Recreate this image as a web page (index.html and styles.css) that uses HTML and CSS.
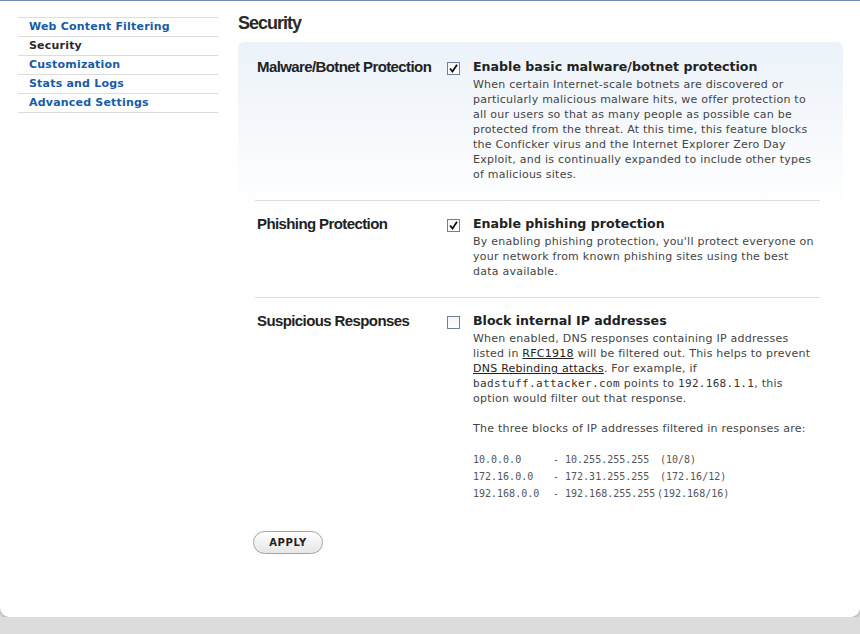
FILE: index.html
```html
<!DOCTYPE html>
<html>
<head>
<meta charset="utf-8">
<title>Security</title>
<link rel="stylesheet" href="styles.css">
</head>
<body>
<div class="page">
  <nav class="sidebar">
    <a class="nav-item" href="#">Web Content Filtering</a>
    <span class="nav-item active">Security</span>
    <a class="nav-item" href="#">Customization</a>
    <a class="nav-item" href="#">Stats and Logs</a>
    <a class="nav-item" href="#">Advanced Settings</a>
  </nav>
  <main class="main">
    <h1 class="heading">Security</h1>
    <div class="box">
      <div class="row">
        <div class="label">Malware/Botnet Protection</div>
        <span class="check checked"><svg viewBox="0 0 11 11" width="11" height="11"><path d="M2 5.5 L4.5 8.5 L9 1.8" fill="none" stroke="#111" stroke-width="1.8"/></svg></span>
        <div class="content">
          <div class="title">Enable basic malware/botnet protection</div>
          <p class="desc">When certain Internet-scale botnets are discovered or particularly malicious malware hits, we offer protection to all our users so that as many people as possible can be protected from the threat. At this time, this feature blocks the Conficker virus and the Internet Explorer Zero Day Exploit, and is continually expanded to include other types of malicious sites.</p>
        </div>
      </div>
      <div class="row">
        <div class="label">Phishing Protection</div>
        <span class="check checked"><svg viewBox="0 0 11 11" width="11" height="11"><path d="M2 5.5 L4.5 8.5 L9 1.8" fill="none" stroke="#111" stroke-width="1.8"/></svg></span>
        <div class="content">
          <div class="title">Enable phishing protection</div>
          <p class="desc">By enabling phishing protection, you'll protect everyone on your network from known phishing sites using the best data available.</p>
        </div>
      </div>
      <div class="row last">
        <div class="label">Suspicious Responses</div>
        <span class="check"></span>
        <div class="content">
          <div class="title">Block internal IP addresses</div>
          <p class="desc">When enabled, DNS responses containing IP addresses listed in <a href="#">RFC1918</a> will be filtered out. This helps to prevent <a href="#">DNS Rebinding attacks</a>. For example, if <code>badstuff.attacker.com</code> points to <code class="ip">192.168.1.1</code>, this option would filter out that response.</p>
          <p class="desc">The three blocks of IP addresses filtered in responses are:</p>
          <div class="ranges">
            <span>10.0.0.0</span><span>- 10.255.255.255</span><span class="cidr1">(10/8)</span>
            <span>172.16.0.0</span><span>- 172.31.255.255</span><span class="cidr1">(172.16/12)</span>
            <span>192.168.0.0</span><span>- 192.168.255.255</span><span>(192.168/16)</span>
          </div>
        </div>
      </div>
      <div class="actions">
        <button class="apply" type="button">APPLY</button>
      </div>
    </div>
  </main>
</div>
</body>
</html>
```

FILE: styles.css
```css
html, body {
  margin: 0;
  padding: 0;
}
body {
  background: #dcdcdc;
  font-family: "DejaVu Sans", Verdana, sans-serif;
}
.page {
  background: #fff;
  border-top: 1px solid #768eb2;
  height: 616px;
  border-radius: 0 0 9px 9px;
  box-shadow: 0 1px 3px rgba(0, 0, 0, 0.28);
  display: flex;
  align-items: flex-start;
}
.sidebar {
  margin-left: 18px;
  margin-top: 16px;
  width: 200px;
  display: flex;
  flex-direction: column;
  border-bottom: 1px solid #dcdcdc;
}
.nav-item {
  display: block;
  border-top: 1px solid #dcdcdc;
  height: 18px;
  line-height: 18px;
  padding-left: 11px;
  font-size: 11px;
  font-weight: bold;
  letter-spacing: 0.2px;
  color: #175ca6;
  text-decoration: none;
}
.nav-item.active {
  color: #2a2a2a;
}
.main {
  margin-left: 20px;
  width: 605px;
  padding-top: 11px;
}
.heading {
  margin: 0 0 8px 0;
  font-family: "Liberation Sans", Arial, sans-serif;
  font-size: 18px;
  line-height: 22px;
  letter-spacing: -1px;
  font-weight: bold;
  color: #2a2a2a;
}
.box {
  border-radius: 6px 6px 0 0;
  background: linear-gradient(#ebf2f9 0px, #f6f9fc 90px, #ffffff 170px);
  padding-top: 2px;
}
.row {
  margin: 0 23px 0 17px;
  padding: 13px 0 18px 0;
  border-bottom: 1px solid #dedede;
  display: grid;
  grid-template-columns: 192px 26px 345px;
  align-items: start;
}
.row.last {
  border-bottom: none;
}
.label {
  padding-left: 2px;
  font-family: "Liberation Sans", Arial, sans-serif;
  font-size: 15px;
  font-weight: bold;
  letter-spacing: -0.6px;
  line-height: 20px;
  color: #222;
}
.check {
  box-sizing: border-box;
  width: 13px;
  height: 13px;
  margin-top: 5px;
  border: 1px solid #6f7f9c;
  background: linear-gradient(#f4f4f4, #ffffff);
  display: flex;
  align-items: center;
  justify-content: center;
}
.check svg {
  display: block;
}
.title {
  font-size: 12.6px;
  font-weight: bold;
  line-height: 20px;
  color: #222;
}
.desc {
  margin: 0 0 15px 0;
  font-size: 11px;
  line-height: 15px;
  letter-spacing: 0.24px;
  color: #444;
}
.content > :last-child {
  margin-bottom: 0;
}
.desc a {
  color: #222;
  text-decoration: underline;
}
.desc code {
  font-family: "DejaVu Sans Mono", monospace;
  font-size: 11px;
  letter-spacing: 0.38px;
  color: #333;
}
.desc code.ip {
  letter-spacing: 0.3px;
}
.ranges {
  display: grid;
  grid-template-columns: 80px 104px auto;
  font-family: "DejaVu Sans Mono", monospace;
  font-size: 10px;
  line-height: 17px;
  color: #555;
}
.ranges .cidr1 {
  padding-left: 3px;
}
.actions {
  padding: 11px 0 0 15px;
}
.apply {
  width: 70px;
  height: 23px;
  border: 1px solid #a3a3a3;
  border-radius: 12px;
  background: linear-gradient(#ffffff, #e6e6e6);
  font-family: "DejaVu Sans", Verdana, sans-serif;
  font-size: 10px;
  font-weight: bold;
  letter-spacing: 0.6px;
  color: #222;
  padding: 0;
  cursor: pointer;
}
```
